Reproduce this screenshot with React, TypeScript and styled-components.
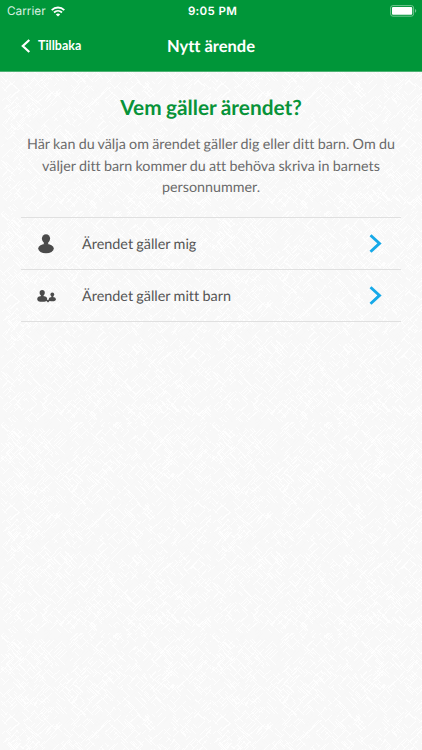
import React from "react";
import styled, { createGlobalStyle } from "styled-components";

const GlobalStyle = createGlobalStyle`
  *, *::before, *::after { box-sizing: border-box; }
  body { margin: 0; background: #f8f8f8; }
`;

const Screen = styled.div`
  position: relative;
  isolation: isolate;
  display: flex;
  flex-direction: column;
  width: 422px;
  height: 750px;
  overflow: hidden;
  background: #f8f8f8;
  font-family: Lato, sans-serif;
  font-variant-ligatures: none;
  text-rendering: geometricPrecision;
`;

const Texture = styled.svg`
  position: absolute;
  inset: 0;
  z-index: -1;
  width: 100%;
  height: 100%;
`;

const Header = styled.header`
  height: 72px;
  flex: none;
  background: #009639;
  border-bottom: 1px solid #4db173;
  color: #fff;
`;

const StatusBar = styled.div`
  display: grid;
  grid-template-columns: 1fr auto 1fr;
  align-items: center;
  height: 22px;
  padding: 0 5px 0 7px;
  font: 400 12px/22px Inter, sans-serif;
`;

const Carrier = styled.div`
  display: flex;
  align-items: center;
  gap: 5px;
  color: #d9f0e1;
  font-size: 11.8px;
`;

const Clock = styled.time`
  padding-left: 1px;
  font-size: 11.5px;
  font-weight: 600;
  letter-spacing: 0.35px;
`;

const BatteryIcon = styled.svg`
  justify-self: end;
`;

const NavBar = styled.nav`
  display: grid;
  grid-template-columns: 1fr auto 1fr;
  align-items: center;
  height: 48px;
  padding: 0 21px;
`;

const BackButton = styled.button`
  display: flex;
  align-items: center;
  gap: 7px;
  padding: 0;
  border: 0;
  background: none;
  color: #fff;
  font: 700 12.5px/20px Lato, sans-serif;
  font-variant-ligatures: none;
`;

const NavTitle = styled.div`
  font-size: 16.5px;
  font-weight: 700;
  line-height: 22px;
`;

const Content = styled.main`
  padding: 21px 21px 0;
`;

const Heading = styled.h1`
  margin: 0;
  color: #089339;
  font-size: 20.8px;
  font-weight: 700;
  line-height: 30px;
  text-align: center;
  word-spacing: -0.6px;
`;

const Intro = styled.p`
  margin: 11px 0 0;
  color: #6b6b6b;
  font-size: 14.3px;
  line-height: 21.5px;
  text-align: center;
  white-space: pre;
  word-spacing: -0.4px;
`;

const Options = styled.div`
  margin-top: 18px;
  border-top: 1px solid #e0e0e0;
`;

const Option = styled.button`
  display: grid;
  grid-template-columns: 50px 1fr 13px;
  column-gap: 11px;
  align-items: center;
  width: 100%;
  height: 52px;
  padding: 2px 19px 0 0;
  border: 0;
  border-bottom: 1px solid #e0e0e0;
  background: none;
  color: #555;
  font: 400 14.4px/20px Lato, sans-serif;
  font-variant-ligatures: none;
  text-rendering: geometricPrecision;
  text-align: left;
  word-spacing: -0.4px;
`;

const OptionIcon = styled.svg`
  justify-self: center;
`;

const OptionLabel = styled.span`
  padding-top: 2px;
`;

const TILE = 211;

function makeWeave(seed: number) {
  let state = seed;
  const next = () => {
    state = (state * 1664525 + 1013904223) % 4294967296;
    return state / 4294967296;
  };
  let d = "";
  for (let i = 0; i < 1900; i++) {
    const x = Math.round(next() * TILE);
    const y = Math.round(next() * TILE);
    const length = 2 + Math.round(next() * 6);
    const dy = next() > 0.5 ? length : -length;
    d += `M${x} ${y}l${length} ${dy}`;
  }
  return d;
}

const lightThreads = makeWeave(17);
const darkThreads = makeWeave(91);

function PaperTexture() {
  return (
    <Texture aria-hidden="true">
      <defs>
        <pattern id="weave" width={TILE} height={TILE} patternUnits="userSpaceOnUse">
          <path d={darkThreads} stroke="#f6f6f6" strokeWidth="0.8" />
          <path d={lightThreads} stroke="#fefefe" strokeWidth="1" />
        </pattern>
      </defs>
      <rect width="100%" height="100%" fill="url(#weave)" />
    </Texture>
  );
}

function Wifi() {
  return (
    <svg width="14" height="11" viewBox="0 0 14 11" fill="none" stroke="#fff" strokeWidth="1.8">
      <path d="M.7 4.1C4.3.6 9.7.6 13.3 4.1" />
      <path d="M3 6.5c2.3-2.2 5.7-2.2 8 0" />
      <path d="M7 10.6 4.8 8.4c1.3-1.1 3.1-1.1 4.4 0z" fill="#fff" stroke="none" />
    </svg>
  );
}

function Battery() {
  return (
    <BatteryIcon width="27" height="12" viewBox="0 0 27 12">
      <rect x=".6" y=".6" width="23" height="10.6" rx="2.3" fill="none" stroke="#72c591" />
      <rect x="2" y="2" width="20.2" height="7.8" rx="1" fill="#fff" />
      <path d="M25 4.1c1.7.5 1.7 3.1 0 3.6z" fill="#72c591" />
    </BatteryIcon>
  );
}

function Person() {
  return (
    <OptionIcon width="16" height="20" viewBox="0 0 16 20" fill="#4b4b4b">
      <ellipse cx="8" cy="4.6" rx="4.1" ry="4.3" />
      <path d="M5.800 7h4.400v3.600H5.800z" />
      <ellipse cx="8" cy="14.6" rx="7.8" ry="4.7" />
    </OptionIcon>
  );
}

function ParentAndChild() {
  return (
    <OptionIcon width="19" height="14" viewBox="0 0 19 14" fill="#4b4b4b">
      <ellipse cx="5.2" cy="3.8" rx="2.6" ry="2.8" />
      <path d="M3.900 5.500h2.600v3H3.900z" />
      <ellipse cx="5.2" cy="9.900" rx="5" ry="2.900" />
      <ellipse cx="15.3" cy="5.5" rx="1.900" ry="2.100" />
      <path d="M14.400 7h1.900v2h-1.900z" />
      <ellipse cx="15.3" cy="10.2" rx="3.500" ry="2.100" />
      <path d="m8.600 10.300 2.400 2.100 2.200-2" fill="none" stroke="#4b4b4b" strokeWidth="1.500" />
    </OptionIcon>
  );
}

function Chevron() {
  return (
    <svg width="13" height="20" viewBox="0 0 13 20" fill="none" stroke="#16a9e8" strokeWidth="2.9">
      <path d="M1.500 1.200 10.500 9.400 1.500 17.700" />
    </svg>
  );
}

export default function App() {
  return (
    <>
      <GlobalStyle />
      <Screen>
        <PaperTexture />
        <Header>
          <StatusBar>
            <Carrier>
              Carrier
              <Wifi />
            </Carrier>
            <Clock>9:05 PM</Clock>
            <Battery />
          </StatusBar>
          <NavBar>
            <BackButton>
              <svg width="10" height="14" viewBox="0 0 10 14" fill="none" stroke="#fff" strokeWidth="2.2">
                <path d="M8.300 1 1.800 7l6.500 6" />
              </svg>
              Tillbaka
            </BackButton>
            <NavTitle>Nytt ärende</NavTitle>
          </NavBar>
        </Header>
        <Content>
          <Heading>Vem gäller ärendet?</Heading>
          <Intro>
            {"Här kan du välja om ärendet gäller dig eller ditt barn. Om du\nväljer ditt barn kommer du att behöva skriva in barnets\npersonnummer."}
          </Intro>
          <Options>
            <Option>
              <Person />
              <OptionLabel>Ärendet gäller mig</OptionLabel>
              <Chevron />
            </Option>
            <Option>
              <ParentAndChild />
              <OptionLabel>Ärendet gäller mitt barn</OptionLabel>
              <Chevron />
            </Option>
          </Options>
        </Content>
      </Screen>
    </>
  );
}
